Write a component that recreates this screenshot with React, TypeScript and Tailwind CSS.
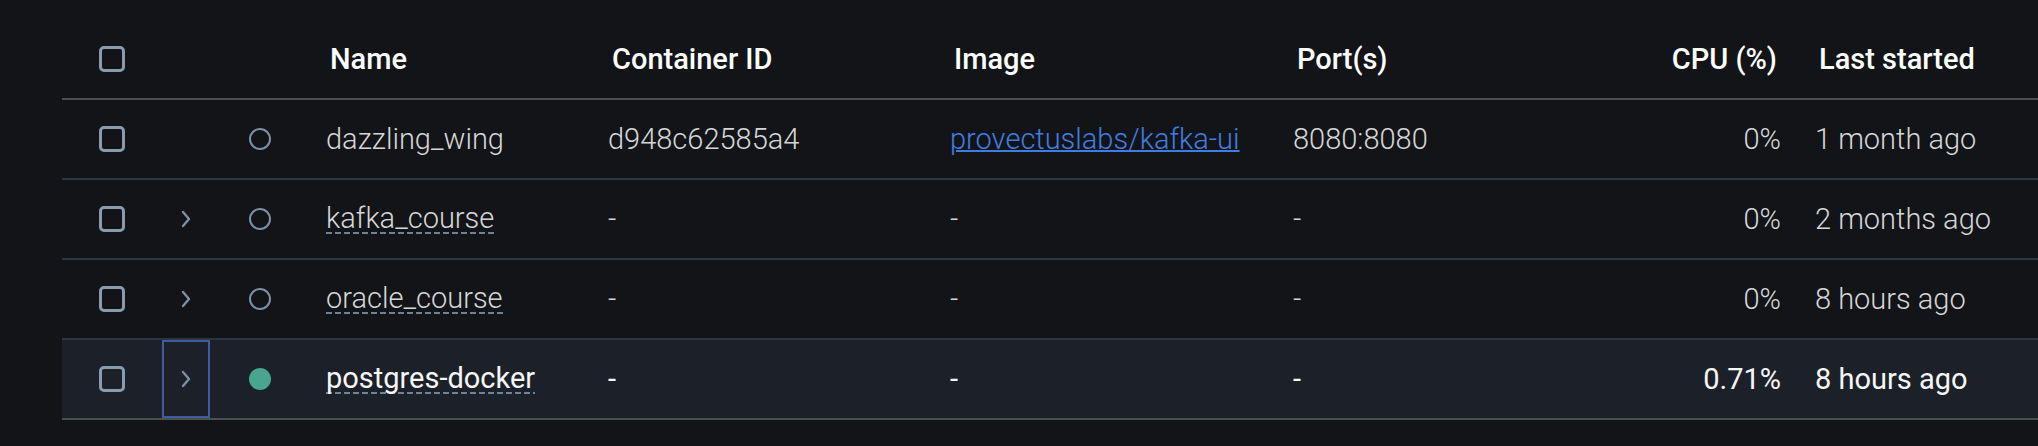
import React from "react";

type Row = {
  name: string;
  compose: boolean;
  id: string;
  image: string;
  port: string;
  cpu: string;
  last: string;
  running: boolean;
  hovered?: boolean;
};

const rows: Row[] = [
  { name: "dazzling_wing", compose: false, id: "d948c62585a4", image: "provectuslabs/kafka-ui", port: "8080:8080", cpu: "0%", last: "1 month ago", running: false },
  { name: "kafka_course", compose: true, id: "-", image: "-", port: "-", cpu: "0%", last: "2 months ago", running: false },
  { name: "oracle_course", compose: true, id: "-", image: "-", port: "-", cpu: "0%", last: "8 hours ago", running: false },
  { name: "postgres-docker", compose: true, id: "-", image: "-", port: "-", cpu: "0.71%", last: "8 hours ago", running: true, hovered: true },
];

const GRID =
  "grid grid-cols-[100px_48px_99px_282px_342px_343px_343px_179px_1fr]";

function Checkbox() {
  return (
    <div className="w-[26px] h-[26px] rounded-[5px] border-[3px] border-[#8a9bb0]" />
  );
}

function Chevron() {
  return (
    <svg width="12" height="20" viewBox="0 0 12 20" fill="none">
      <polyline
        points="3,3 9,10 3,17"
        stroke="#7d8ea3"
        strokeWidth="2.4"
        strokeLinecap="round"
        strokeLinejoin="round"
      />
    </svg>
  );
}

export default function App() {
  return (
    <div className="min-h-screen bg-[#121418] pt-[20px] pl-[62px] font-['Roboto',sans-serif] text-[29px] leading-none overflow-hidden">
      {/* header */}
      <div className={`${GRID} h-[80px] border-b-2 border-[#4d4e50] text-white font-medium`}>
        <div className="flex items-center justify-center">
          <Checkbox />
        </div>
        <div />
        <div />
        <div className="flex items-center px-[21px]">Name</div>
        <div className="flex items-center px-[21px]">Container ID</div>
        <div className="flex items-center px-[21px]">Image</div>
        <div className="flex items-center px-[21px]">Port(s)</div>
        <div className="flex items-center justify-end px-[21px]">CPU (%)</div>
        <div className="flex items-center px-[21px] whitespace-nowrap">Last started</div>
      </div>

      {rows.map((r, i) => {
        const last = i === rows.length - 1;
        return (
          <div
            key={r.name}
            className={`${GRID} h-[80px] border-b-2 ${
              last ? "border-[#4d4e50]" : "border-[#2c3643]"
            } ${r.hovered ? "bg-[#1c2129] text-[#f6f6f6] font-normal" : "text-[#d6d6d6] font-light"}`}
          >
            <div className="flex items-center justify-center">
              <Checkbox />
            </div>
            <div
              className={`flex items-center justify-center ${
                r.hovered ? "border-2 border-[#3a5e9e]" : ""
              }`}
            >
              {r.compose && <Chevron />}
            </div>
            <div className="flex items-center justify-center">
              {r.running ? (
                <div className="w-[22px] h-[22px] rounded-full bg-[#48a68e]" />
              ) : (
                <div className="w-[22px] h-[22px] rounded-full border-[2.5px] border-[#7d90a6]" />
              )}
            </div>
            <div className="flex items-center px-[17px] whitespace-nowrap">
              {r.compose ? (
                <span className="bg-[linear-gradient(90deg,#6e8399_6px,transparent_6px)] bg-[length:9px_2px] bg-repeat-x bg-[position:0_100%] pb-[1px]">
                  {r.name}
                </span>
              ) : (
                <span>{r.name}</span>
              )}
            </div>
            <div className="flex items-center px-[17px]">{r.id}</div>
            <div className="flex items-center px-[17px] whitespace-nowrap">
              {r.image !== "-" ? (
                <span className="text-[#3f7ee0] underline decoration-2 underline-offset-[1px]">
                  {r.image}
                </span>
              ) : (
                r.image
              )}
            </div>
            <div className="flex items-center px-[17px]">{r.port}</div>
            <div className="flex items-center justify-end px-[17px]">{r.cpu}</div>
            <div className="flex items-center px-[17px] whitespace-nowrap">{r.last}</div>
          </div>
        );
      })}
    </div>
  );
}
